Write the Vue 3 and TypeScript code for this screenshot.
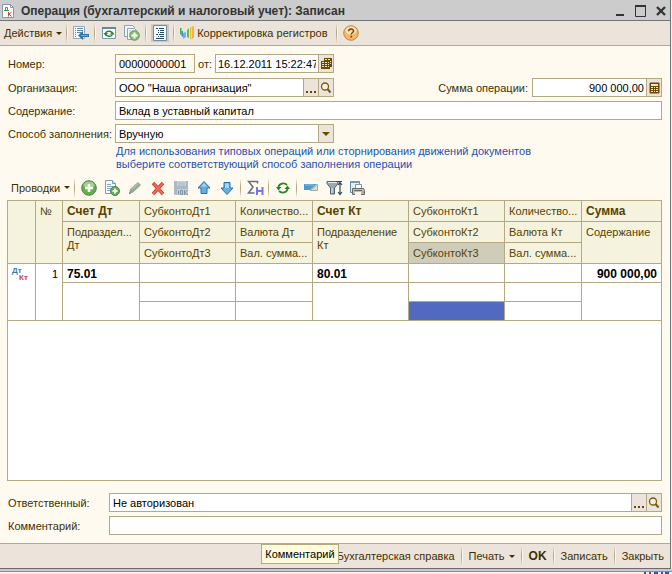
<script setup lang="ts">
import { ref } from 'vue'

const docNumber = ref('00000000001')
const docDate = ref('16.12.2011 15:22:47')
const organization = ref('ООО "Наша организация"')
const total = ref('900 000,00')
const content = ref('Вклад в уставный капитал')
const fillMode = ref('Вручную')
const responsible = ref('Не авторизован')
const comment = ref('')
const columnWidths: number[] = [28, 27, 77, 96, 77, 96, 96, 77, 79]
</script>

<template>
  <div class="window">
    <header class="titlebar">
      <svg class="title-icon" width="12" height="15" viewBox="0 0 12 15">
        <path d="M.5 1.500h8l3 3v10H.5z" fill="#fdfdfd" stroke="#8798a8" />
        <path d="M8.500 1.500v3h3" fill="none" stroke="#8798a8" />
        <path d="M3.500 7V4.500h2V7M2 7.500h5" fill="none" stroke="#3f9a4b" />
        <path d="M6.500 9v4.500M9.500 9l-2.500 2 2.500 2.500" fill="none" stroke="#d8423a" />
      </svg>
      <h1>Операция (бухгалтерский и налоговый учет): Записан</h1>
      <div class="window-buttons">
        <button type="button" aria-label="Свернуть">
          <svg width="12" height="12" viewBox="0 0 12 12"><path d="M1 9h8v2H1z" fill="#333" /></svg>
        </button>
        <button type="button" aria-label="Развернуть">
          <svg width="12" height="12" viewBox="0 0 12 12"><path d="M.5 1h10v10.500H.5z" fill="none" stroke="#333" /><path d="M0 0h11v2H0z" fill="#333" /></svg>
        </button>
        <button type="button" aria-label="Закрыть окно">
          <svg width="12" height="12" viewBox="0 0 12 12"><path d="M2 2l8 8M10 2l-8 8" stroke="#333" stroke-width="2.400" /></svg>
        </button>
      </div>
    </header>

    <nav class="toolbar main-toolbar">
      <button type="button" class="text-button">Действия<i class="caret"></i></button>
      <i class="sep"></i>
      <button type="button" class="tool" aria-label="Перейти">
        <svg width="16" height="16" viewBox="0 0 16 16">
          <path d="M.5 1.500h11v12H.5z" fill="#f4f8fb" stroke="#8fa9bd" />
          <path d="M2 3.500h1M4 3.500h6M2 5.500h1M4 5.500h6M2 7.500h1M4 7.500h5M2 9.500h1M2 11.500h1" stroke="#5b8cad" />
          <path d="M10 6v3h6v3h-6v3L5 10.500z" fill="#2f76a8" />
          <path d="M8 10.500h7" stroke="#6eacd2" />
        </svg>
      </button>
      <i class="sep"></i>
      <button type="button" class="tool" aria-label="Перечитать">
        <svg width="16" height="16" viewBox="0 0 16 16">
          <path d="M1.500 2.500h13v11h-13z" fill="#fff" stroke="#7798b0" />
          <path d="M1 2h14v2H1z" fill="#5a89aa" />
          <path d="M4.500 8c1-2 4.500-2.500 6.500-.5M11.500 9.500c-1 2-4.500 2.500-6.500.5" fill="none" stroke="#27821f" stroke-width="1.400" />
          <path d="M2.500 8h4.500l-2.300 3zM9 9.500h4.500l-2.200-3z" fill="#27821f" />
        </svg>
      </button>
      <button type="button" class="tool" aria-label="Скопировать">
        <svg width="16" height="16" viewBox="0 0 16 16">
          <path d="M.5.5h8l2 2v9H.5z" fill="#eef4f7" stroke="#8aa5b6" />
          <path d="M3.500 3.500h7l2 2v9h-9z" fill="#f6fafb" stroke="#8aa5b6" />
          <path d="M5 6h5M5 8h3" stroke="#b3c7d3" />
          <circle cx="10.500" cy="10.500" r="4.800" fill="#8dbd75" stroke="#66965a" />
          <path d="M10.500 7.500v6M7.500 10.500h6" stroke="#fff" stroke-width="2" />
        </svg>
      </button>
      <i class="sep"></i>
      <button type="button" class="tool pressed" aria-label="Показать список">
        <svg width="16" height="16" viewBox="0 0 16 16">
          <path d="M1.500.5h13v15h-13z" fill="#f4f8fc" stroke="#6f8da6" />
          <path d="M4 3.500h2M7 3.500h5M6 5.500h1M8 5.500h4M6 7.500h1M8 7.500h4M4 9.500h2M7 9.500h5M6 11.500h1M8 11.500h4M4 13.500h8" stroke="#244861" />
        </svg>
      </button>
      <i class="sep"></i>
      <button type="button" class="text-button with-icon">
        <svg width="16" height="14" viewBox="0 0 16 14">
          <path d="M1 2h1.500v7L1 8z" fill="#36b54c" /><path d="M2.500 5H4v6l-1.500-1z" fill="#3d86d8" /><path d="M4 7l3-1v5l-3 2z" fill="#62b8ee" />
          <path d="M8 4l2-2v10l-2-1z" fill="#5ac04c" /><path d="M11 2l3-2 1 1v11l-4 1z" fill="#f5b53d" /><path d="M12.500 2v10" stroke="#ffe18a" />
        </svg>
        Корректировка регистров
      </button>
      <i class="sep"></i>
      <button type="button" class="tool" aria-label="Справка">
        <svg width="16" height="16" viewBox="0 0 16 16">
          <circle cx="8" cy="8" r="7.300" fill="#f6b765" stroke="#b98850" />
          <ellipse cx="8" cy="5.500" rx="5.500" ry="4" fill="#fde0b0" />
          <path d="M5.700 6.300c0-3 4.800-3 4.800-.3 0 1.800-2.300 1.700-2.300 3.500" fill="none" stroke="#6a4420" stroke-width="1.500" />
          <path d="M7.400 10.800h1.700v1.700H7.400z" fill="#6a4420" />
        </svg>
      </button>
    </nav>

    <main class="body">
      <div class="row">
        <label class="caption" for="number">Номер:</label>
        <div class="field number"><input id="number" v-model="docNumber" type="text" /></div>
        <label class="from" for="date">от:</label>
        <div class="field date">
          <input id="date" v-model="docDate" type="text" />
          <button type="button" aria-label="Календарь">
            <svg width="11" height="12" viewBox="0 0 11 12">
              <path d="M3 0h8v9H9v2H0V3h3z" fill="#6b4a00" />
              <path d="M1 4h2v1H1zM4 4h2v1H4zM7 4h1v1H7zM1 6h2v1H1zM4 6h2v1H4zM7 6h1v1H7zM1 8h2v1H1zM4 8h2v1H4zM7 8h1v1H7zM4 1h2v1H4zM7 1h2v1H7zM9 3h1v1H9zM9 5h1v1H9z" fill="#eee6cf" />
            </svg>
          </button>
        </div>
      </div>

      <div class="row">
        <label class="caption" for="org">Организация:</label>
        <div class="field medium">
          <input id="org" v-model="organization" type="text" />
          <button type="button" aria-label="Выбрать организацию"><i class="dots"></i></button>
          <button type="button" aria-label="Открыть организацию">
            <svg width="12" height="12" viewBox="0 0 12 12"><circle cx="5" cy="4.500" r="3.500" fill="#f6f0df" stroke="#7a5a10" stroke-width="1.300" /><path d="M7.500 7l3 3.500" stroke="#7a5a10" stroke-width="2" /></svg>
          </button>
        </div>
        <label class="sum-label" for="total">Сумма операции:</label>
        <div class="field total">
          <input id="total" v-model="total" type="text" class="right" />
          <button type="button" aria-label="Калькулятор">
            <svg width="11" height="12" viewBox="0 0 11 12">
              <rect x=".5" y=".5" width="10" height="11" rx="1" fill="#6b4a00" />
              <path d="M2 2h7v2H2zM2 5h2v1H2zM5 5h1v1H5zM7 5h2v1H7zM2 7h2v1H2zM5 7h1v1H5zM7 7h2v1H7zM2 9h2v1H2zM5 9h1v1H5zM7 9h2v1H7z" fill="#eee6cf" />
            </svg>
          </button>
        </div>
      </div>

      <div class="row">
        <label class="caption" for="content">Содержание:</label>
        <div class="field wide"><input id="content" v-model="content" type="text" /></div>
      </div>

      <div class="row">
        <label class="caption" for="mode">Способ заполнения:</label>
        <div class="field medium">
          <select id="mode" v-model="fillMode"><option>Вручную</option></select>
          <span class="combo-arrow"><i></i></span>
        </div>
      </div>

      <p class="hint">Для использования типовых операций или сторнирования движений документов<br />выберите соответствующий способ заполнения операции</p>

      <nav class="toolbar grid-toolbar">
        <button type="button" class="text-button">Проводки<i class="caret"></i></button>
        <i class="sep"></i>
        <button type="button" class="tool" aria-label="Добавить">
          <svg width="16" height="16" viewBox="0 0 16 16">
            <circle cx="8" cy="8" r="7.300" fill="#68ad50" stroke="#4d8548" />
            <ellipse cx="8" cy="5" rx="5.500" ry="3.500" fill="#a0d08b" />
            <path d="M8 4v8M4 8h8" stroke="#fff" stroke-width="2.600" />
          </svg>
        </button>
        <button type="button" class="tool" aria-label="Добавить копированием">
          <svg width="16" height="16" viewBox="0 0 16 16">
            <path d="M1.500.5h7l3 3v10h-10z" fill="#f8fcfd" stroke="#7f9db0" /><path d="M8.500.5v3h3" fill="#d6e5ed" stroke="#7f9db0" />
            <path d="M3 4.500h4M3 6.500h6M3 8.500h4M3 10.500h3" stroke="#7fa9c3" />
            <circle cx="11" cy="11" r="4.500" fill="#68ad50" stroke="#4d8548" /><path d="M11 8.500v5M8.500 11h5" stroke="#fff" stroke-width="1.800" />
          </svg>
        </button>
        <button type="button" class="tool" aria-label="Изменить">
          <svg width="16" height="16" viewBox="0 0 16 16"><path d="M2 14l1-5 8-7 3 3-8 7.500z" fill="#93aa91" /><path d="M4 9l7-6 1 1-7 6z" fill="#b3c3ae" /><path d="M2 14l.5-2 1.500 1.500z" fill="#657765" /></svg>
        </button>
        <button type="button" class="tool" aria-label="Удалить">
          <svg width="16" height="16" viewBox="0 0 16 16"><path d="M3 3l10 11M13 3L3 14" stroke="#c93a2c" stroke-width="3.400" /><path d="M3 3l10 11M13 3L3 14" stroke="#f2705f" stroke-width="1.800" /></svg>
        </button>
        <button type="button" class="tool" aria-label="Закончить редактирование" disabled>
          <svg width="16" height="16" viewBox="0 0 16 16">
            <path d="M1 1h14v14H2l-1-1z" fill="#a9b9c5" /><path d="M4 1h9v5H4z" fill="#cbd6dc" /><path d="M5 3h7M5 5h7" stroke="#a5b6c0" />
            <path d="M4 9h11v6H4z" fill="#c3ced5" />
            <path d="M5.500 10.500v4M7.500 10.500h2v4h-2zM11.500 10v5M15 10l-3 2.500 3 2.500" fill="none" stroke="#8094a2" />
          </svg>
        </button>
        <button type="button" class="tool" aria-label="Переместить вверх">
          <svg width="16" height="16" viewBox="0 0 16 16"><path d="M8 1.500l6 6.500h-3v5.500H5V8H2z" fill="#66afe0" stroke="#2b6fa5" /><path d="M8 3L5 6.500h6z" fill="#a5d4f2" /></svg>
        </button>
        <button type="button" class="tool" aria-label="Переместить вниз">
          <svg width="16" height="16" viewBox="0 0 16 16"><path d="M8 14.500L2 8h3V2.500h6V8h3z" fill="#66afe0" stroke="#2b6fa5" /><path d="M6 3.500h4V8H6z" fill="#a5d4f2" /></svg>
        </button>
        <i class="sep"></i>
        <button type="button" class="tool" aria-label="Итоги">
          <svg width="17" height="16" viewBox="0 0 17 16">
            <path d="M10.500 3.500v-2h-9L6 7l-4.500 6h6" fill="none" stroke="#66707a" stroke-width="1.500" />
            <path d="M10 7v8M15.500 7v8M10 11h6" fill="none" stroke="#7774ec" stroke-width="2" />
          </svg>
        </button>
        <i class="sep"></i>
        <button type="button" class="tool" aria-label="Обновить">
          <svg width="16" height="16" viewBox="0 0 16 16">
            <path d="M3.500 7c.5-4 6-4.500 8.500-2M12.500 9c-.5 4-6 4.500-8.500 2" fill="none" stroke="#2d851f" stroke-width="1.800" />
            <path d="M1 7h5.500l-3 3.500zM9.500 9H15l-2.500-3.500z" fill="#2d851f" />
          </svg>
        </button>
        <i class="sep"></i>
        <button type="button" class="tool" aria-label="Дт/Кт">
          <svg width="16" height="16" viewBox="0 0 16 16">
            <path d="M1 4h13L7 10H1z" fill="#4b9ac9" /><path d="M2 5h9" stroke="#89c3e5" />
            <path d="M14.500 4.500v6H7z" fill="#dadbd2" stroke="#a9aaa4" />
          </svg>
        </button>
        <button type="button" class="tool" aria-label="Отбор">
          <svg width="17" height="16" viewBox="0 0 17 16">
            <path d="M1 1.500h11v2L8.500 8v6h-4V8L1 3.500z" fill="#9aa9b4" stroke="#506472" /><path d="M2 2.500h9M6 8v5" stroke="#e6edf0" />
            <path d="M10 1.500h6" stroke="#33495a" />
            <path d="M14 2v12M12 5l2-2.500L16 5M12 12l2 2.500 2-2.500" fill="none" stroke="#33495a" stroke-width="1.200" />
          </svg>
        </button>
        <button type="button" class="tool" aria-label="Вывести на печать">
          <svg width="16" height="16" viewBox="0 0 16 16">
            <path d="M1.500 1.500h9v11h-9z" fill="#e3eff6" stroke="#5d8eb0" /><path d="M1 1h10v2H1z" fill="#6b9dbd" />
            <path d="M6.500 4.500h6v5h-6z" fill="#fff" stroke="#8c9298" />
            <path d="M3.500 8.500h11l1 2v4h-12z" fill="#bfc0be" stroke="#686b6e" /><path d="M6 12h6v3H6z" fill="#f8f6ef" /><path d="M5 10.500h8" stroke="#65686b" /><path d="M13 12h2" stroke="#e4682c" />
          </svg>
        </button>
      </nav>

      <div class="grid">
        <table>
          <colgroup><col v-for="(w, i) in columnWidths" :key="i" :style="{ width: w + 'px' }" /></colgroup>
          <thead>
            <tr>
              <th rowspan="3"></th>
              <th rowspan="3">№</th>
              <th class="strong">Счет Дт</th>
              <th>СубконтоДт1</th>
              <th>Количество...</th>
              <th class="strong">Счет Кт</th>
              <th>СубконтоКт1</th>
              <th>Количество...</th>
              <th class="strong">Сумма</th>
            </tr>
            <tr>
              <th rowspan="2">Подраздел...<br />Дт</th>
              <th>СубконтоДт2</th>
              <th>Валюта Дт</th>
              <th rowspan="2">Подразделение<br />Кт</th>
              <th>СубконтоКт2</th>
              <th>Валюта Кт</th>
              <th rowspan="2" class="last">Содержание</th>
            </tr>
            <tr>
              <th>СубконтоДт3</th>
              <th>Вал. сумма...</th>
              <th class="current">СубконтоКт3</th>
              <th>Вал. сумма...</th>
            </tr>
          </thead>
          <tbody>
            <tr>
              <td rowspan="3" class="mark"><span class="dt">Дт</span><span class="kt">Кт</span></td>
              <td rowspan="3" class="right">1</td>
              <td class="strong">75.01</td>
              <td></td>
              <td></td>
              <td class="strong">80.01</td>
              <td></td>
              <td></td>
              <td class="strong right">900 000,00</td>
            </tr>
            <tr>
              <td rowspan="2"></td>
              <td></td>
              <td></td>
              <td rowspan="2"></td>
              <td></td>
              <td></td>
              <td rowspan="2" class="last"></td>
            </tr>
            <tr>
              <td></td>
              <td></td>
              <td class="selected"></td>
              <td></td>
            </tr>
          </tbody>
        </table>
      </div>

      <div class="row bottom-row">
        <label class="caption" for="responsible">Ответственный:</label>
        <div class="field wide">
          <input id="responsible" v-model="responsible" type="text" />
          <button type="button" aria-label="Выбрать ответственного"><i class="dots"></i></button>
          <button type="button" aria-label="Открыть ответственного">
            <svg width="12" height="12" viewBox="0 0 12 12"><circle cx="5" cy="4.500" r="3.500" fill="#f6f0df" stroke="#7a5a10" stroke-width="1.300" /><path d="M7.500 7l3 3.500" stroke="#7a5a10" stroke-width="2" /></svg>
          </button>
        </div>
      </div>
      <div class="row bottom-row">
        <label class="caption" for="comment">Комментарий:</label>
        <div class="field wide"><input id="comment" v-model="comment" type="text" /></div>
      </div>
    </main>

    <footer class="footer">
      <div class="help-slot">
        <button type="button">Бухгалтерская справка</button>
        <span class="tooltip" role="tooltip">Комментарий</span>
      </div>
      <i class="sep"></i>
      <button type="button" class="text-button">Печать<i class="caret"></i></button>
      <i class="sep"></i>
      <button type="button" class="strong">OK</button>
      <i class="sep"></i>
      <button type="button">Записать</button>
      <i class="sep"></i>
      <button type="button">Закрыть</button>
    </footer>
  </div>
  <div class="backdrop">
    <svg width="28" height="2" viewBox="0 0 28 2"><path d="M0 1h2M5 1h2M10 1h4M17 1h2M21 1h4" stroke="#2458b8" stroke-width="2" /></svg>
  </div>
</template>

<style>
html,
body,
#app {
  height: 100%;
}
body {
  margin: 0;
  background: #f5f1e3;
}
#app {
  display: flex;
  flex-direction: column;
}
</style>

<style scoped>
* {
  box-sizing: border-box;
}
.window {
  flex: 1;
  display: flex;
  flex-direction: column;
  margin-right: 1px;
  border-right: 1px solid #6f7676;
  border-bottom: 1px solid #6c6a70;
  background: #fffaf0;
  color: #403000;
  font: 11px/14px "Liberation Sans", Arial, sans-serif;
}
.window button,
.window input,
.window select {
  font: inherit;
  color: inherit;
}
button {
  border: 0;
  padding: 0;
  background: none;
  white-space: nowrap;
}
svg {
  display: block;
}
.strong,
.window .strong {
  font-size: 12px;
  font-weight: bold;
}
.titlebar {
  display: flex;
  align-items: center;
  height: 21px;
  padding: 1px 3px 0 2px;
  background: #ccc;
  border-bottom: 1px solid #6f7676;
}
.titlebar h1 {
  flex: 1;
  margin: 0 0 0 7px;
  font-size: 12px;
  font-weight: bold;
  white-space: nowrap;
  color: #333;
}
.window-buttons {
  display: flex;
  gap: 8px;
}
.toolbar {
  display: flex;
  align-items: center;
}
.main-toolbar {
  height: 25px;
  padding-left: 4px;
  background: #ece4da;
  border-bottom: 1px solid #b5a984;
}
.text-button {
  display: flex;
  align-items: center;
}
.with-icon {
  gap: 2px;
  padding-right: 4px;
}
.caret {
  display: inline-block;
  margin-left: 4px;
  border: 3px solid transparent;
  border-top-color: #403000;
  border-bottom: 0;
}
.sep {
  flex: none;
  width: 2px;
  height: 20px;
  margin: 0 4px;
  background: linear-gradient(90deg, #b5a984 1px, #fffaf0 1px);
  mask: linear-gradient(transparent, #000 40%, #000 60%, transparent);
}
.tool {
  display: grid;
  place-items: center;
  width: 18px;
  height: 18px;
}
.tool + .tool {
  margin-left: 5px;
}
.pressed {
  background: #cec9bd;
}
.body {
  flex: 1;
  display: flex;
  flex-direction: column;
  padding: 8px 8px 8px 7px;
}
.row {
  display: flex;
  align-items: center;
  margin-bottom: 4px;
}
.row:first-child {
  margin-bottom: 5px;
}
.caption {
  flex: none;
  width: 108px;
  padding-left: 1px;
  white-space: nowrap;
}
.bottom-row .caption {
  width: 102px;
}
.bottom-row:last-child {
  margin-bottom: 0;
}
.from {
  width: 20px;
  padding-left: 3px;
}
.field {
  display: flex;
  height: 19px;
  border: 1px solid #b5a984;
  background: #fff;
}
.field input,
.field select {
  flex: 1;
  min-width: 0;
  border: 0;
  padding: 0 3px;
  outline: 0;
  background: none;
  appearance: none;
  color: #000;
}
.field .right {
  padding-right: 2px;
}
.field.date input {
  padding: 0 2px;
}
.field button,
.combo-arrow {
  display: grid;
  place-items: center;
  flex: none;
  width: 15px;
  background: #ece4da;
  border-left: 1px solid #b5a984;
}
.number {
  width: 80px;
}
.number input {
  background: #fffaf0;
}
.date {
  width: 119px;
}
.medium {
  width: 219px;
}
.total {
  width: 130px;
}
.field .right,
td.right {
  text-align: right;
}
.wide {
  flex: 1;
}
.sum-label {
  margin-left: auto;
  padding-right: 4px;
}
.dots {
  width: 10px;
  height: 2px;
  margin-top: 8px;
  background: repeating-linear-gradient(90deg, #6b4a00 0 2px, transparent 2px 4px);
}
.combo-arrow i {
  border: 4px solid transparent;
  border-top-color: #6b4a00;
  border-bottom: 0;
}
.hint {
  margin: -2px 0 4px 109px;
  line-height: 13px;
  color: #1f52b0;
}
.grid-toolbar {
  height: 25px;
  padding-left: 4px;
}
.grid {
  flex: 1;
  margin-bottom: 12px;
  border: 1px solid #b5a984;
  background: #fff;
}
table {
  width: 100%;
  table-layout: fixed;
  border-collapse: separate;
  border-spacing: 0;
}
th,
td {
  height: 19px;
  padding: 3px 4px 0;
  border: solid #b5a984;
  border-width: 0 1px 1px 0;
  vertical-align: top;
  text-align: left;
  white-space: nowrap;
  overflow: hidden;
}
th {
  height: 21px;
  padding-top: 4px;
  line-height: 13px;
  font-weight: normal;
  background: #f5f2dd;
  color: #574300;
}
td {
  color: #000;
}
tr:first-child > :last-child,
.last {
  border-right: 0;
}
th.current {
  background: #cfccb9;
}
td.selected {
  background: #5069c1;
}
.mark span {
  display: block;
  font-size: 8px;
  line-height: 7px;
  font-weight: bold;
}
.dt {
  color: #3b7ba6;
}
.kt {
  padding-left: 7px;
  color: #cc4438;
}
.footer {
  display: flex;
  align-items: center;
  justify-content: flex-end;
  height: 25px;
  padding-right: 6px;
  background: #ece4da;
  border-top: 1px solid #b5a984;
}
.footer .sep {
  margin: 0 6px;
}
.help-slot {
  position: relative;
}
.tooltip {
  position: absolute;
  right: 116px;
  top: -5px;
  padding: 2px 3px;
  border: 1px solid #b5a984;
  background: #fffadc;
  color: #000;
}
.backdrop {
  display: flex;
  justify-content: flex-end;
  align-items: flex-end;
  height: 5px;
  background: linear-gradient(#cbc8d0 2px, #8f8d90 2px 3px, #f5f1e3 3px);
}
</style>
